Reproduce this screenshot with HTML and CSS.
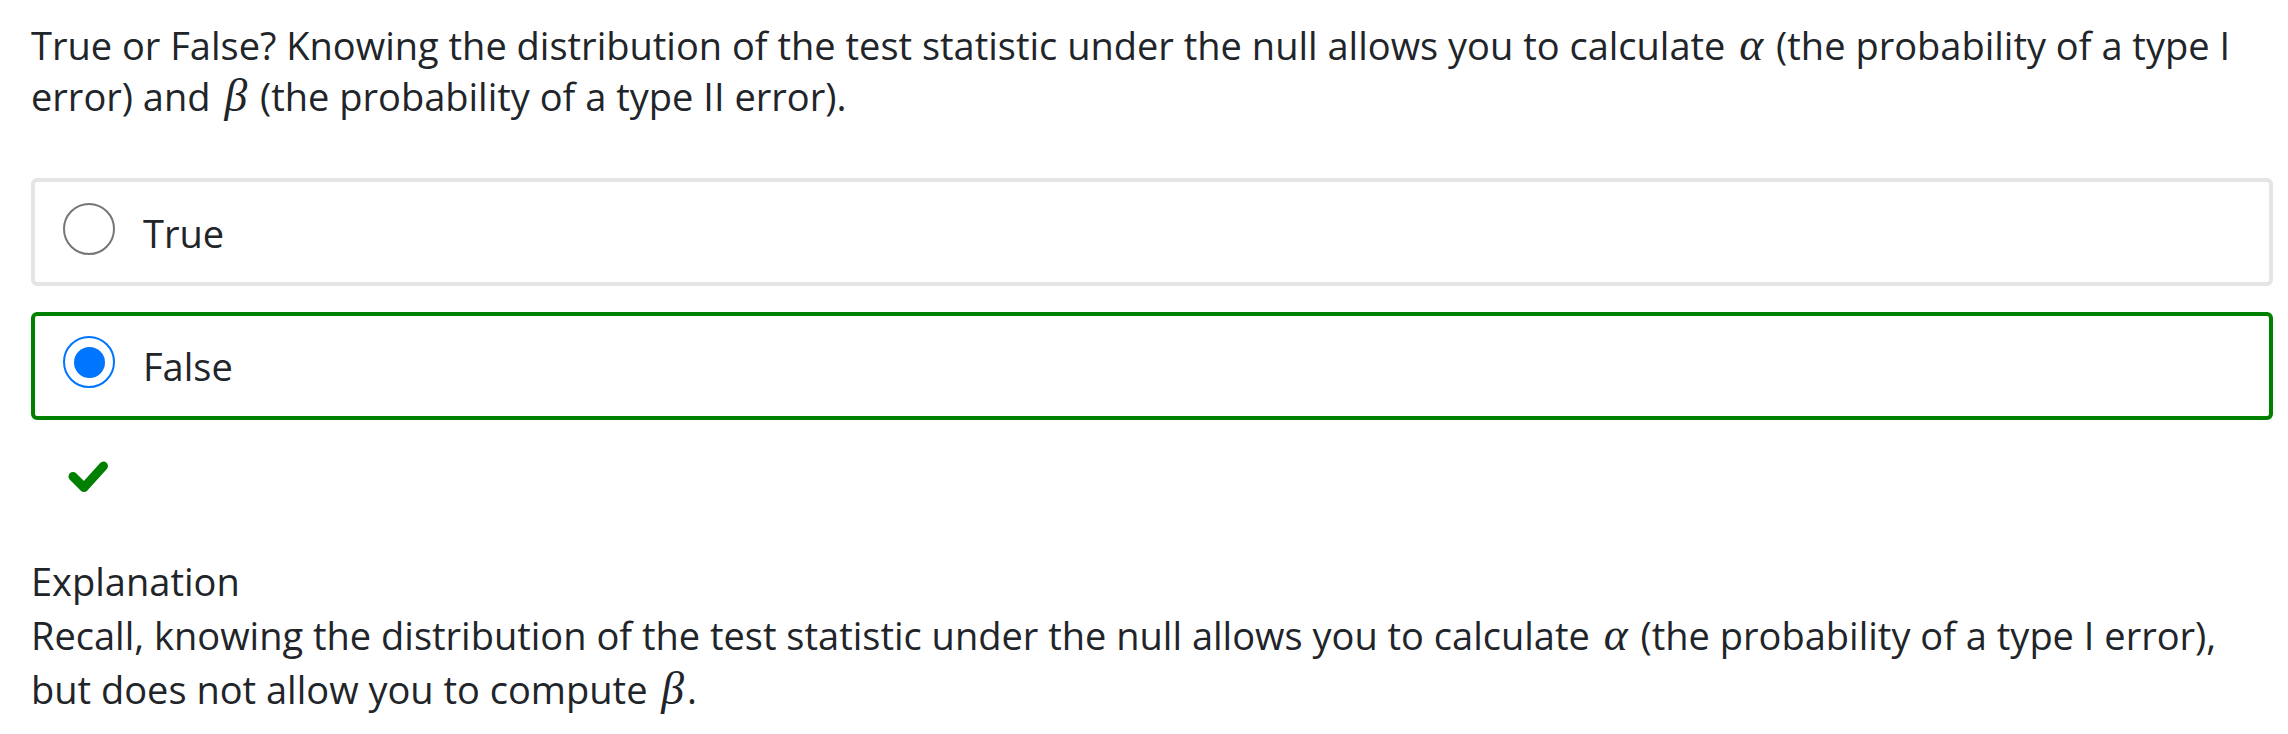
FILE: index.html
```html
<!DOCTYPE html>
<html lang="en">
<head>
<meta charset="utf-8">
<title>Quiz question</title>
<link rel="stylesheet" href="styles.css">
</head>
<body>
<main class="quiz">
  <p class="question">True or False? Knowing the distribution of the test statistic under the null allows you to calculate <span class="math">α</span> (the probability of a type I error) and <span class="math">β</span> (the probability of a type II error).</p>

  <div class="options">
    <label class="option">
      <span class="radio"></span>
      <span class="option-text">True</span>
    </label>
    <label class="option option-correct">
      <span class="radio radio-checked"><span class="radio-dot"></span></span>
      <span class="option-text">False</span>
    </label>
  </div>

  <div class="feedback">
    <svg class="check" width="40" height="32" viewBox="0 0 40 32" aria-hidden="true">
      <polyline points="5,15.5 16,26.5 35.5,5" fill="none" stroke="#008000" stroke-width="9" stroke-linecap="round" stroke-linejoin="round"/>
    </svg>
  </div>

  <section class="explanation">
    <div class="explanation-title">Explanation</div>
    <p class="explanation-text">Recall, knowing the distribution of the test statistic under the null allows you to calculate <span class="math">α</span> (the probability of a type I error), but does not allow you to compute <span class="math">β</span>.</p>
  </section>
</main>
</body>
</html>
```

FILE: styles.css
```css
html, body {
  margin: 0;
  padding: 0;
  background: #ffffff;
}

body {
  font-family: "Open Sans", "Noto Sans", sans-serif;
  font-size: 38px;
  line-height: 51px;
  color: #212529;
}

.quiz {
  width: 2242px;
  padding: 20px 0 0 31px;
}

.question {
  margin: 0;
}

.math {
  font-family: "Liberation Serif", "DejaVu Serif", serif;
  font-style: italic;
  font-size: 1.2em;
  line-height: 1;
  margin: 0 3px 0 4px;
}

.options {
  display: flex;
  flex-direction: column;
  gap: 26px;
  margin-top: 56px;
}

.option {
  display: flex;
  align-items: flex-start;
  height: 100px;
  padding: 0 0 0 28px;
  border: 4px solid #e5e5e5;
  border-radius: 6px;
  box-sizing: content-box;
}

.option-correct {
  border-color: #008000;
}

.radio {
  flex: none;
  width: 52px;
  height: 52px;
  margin-top: 21px;
  box-sizing: border-box;
  border: 2px solid #767676;
  border-radius: 50%;
  display: flex;
  align-items: center;
  justify-content: center;
}

.radio-checked {
  margin-top: 20px;
  border-color: #0075ff;
}

.radio-dot {
  width: 31px;
  height: 31px;
  border-radius: 50%;
  background: #0075ff;
}

.option-text {
  margin-left: 28px;
  margin-top: 26px;
}

.option-correct .option-text {
  margin-top: 25px;
}

.feedback {
  margin-top: 41px;
  padding-left: 37px;
  height: 32px;
}

.check {
  display: block;
}

.explanation {
  margin-top: 61px;
  line-height: 54px;
}

.explanation-title {
  margin: 0;
}

.explanation-text {
  margin: 0;
}
```
